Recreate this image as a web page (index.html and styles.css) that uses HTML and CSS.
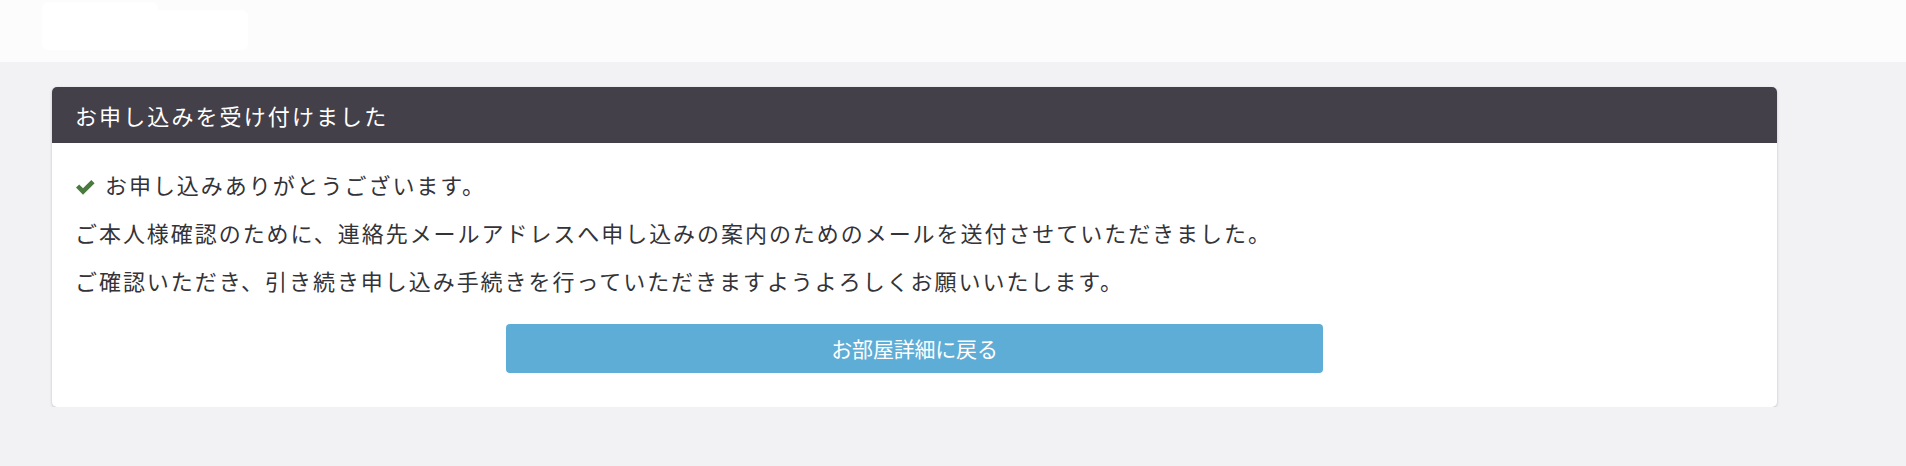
FILE: index.html
```html
<!DOCTYPE html>
<html lang="ja">
<head>
  <meta charset="UTF-8">
  <meta name="viewport" content="width=device-width, initial-scale=1.0">
  <title>お申し込み完了</title>
  <link rel="stylesheet" href="styles.css">
</head>
<body>
  <div class="topbar">
    <div class="logo">
      <span class="logo-top"></span>
      <span class="logo-bottom"></span>
    </div>
  </div>
  <div class="main">
    <div class="card">
      <div class="card-header">お申し込みを受け付けました</div>
      <div class="card-body">
        <p class="msg">
          <svg class="check" viewBox="0 0 19 15" width="19" height="15">
            <path d="M0 7.6 L3.2 4.4 L7 8.2 L15.3 0 L18.6 3.3 L7 14.8 Z" fill="#4b7a3f"/>
          </svg>お申し込みありがとうございます。
        </p>
        <p class="msg">ご本人様確認のために、連絡先メールアドレスへ申し込みの案内のためのメールを送付させていただきました。</p>
        <p class="msg">ご確認いただき、引き続き申し込み手続きを行っていただきますようよろしくお願いいたします。</p>
        <a class="btn-back" href="javascript:;">お部屋詳細に戻る</a>
      </div>
    </div>
  </div>
</body>
</html>
```

FILE: styles.css
```css
* {
  margin: 0;
  padding: 0;
  box-sizing: border-box;
}
body {
  background-color: #f2f2f4;
  font-family: "Noto Sans CJK JP", "Noto Sans", sans-serif;
  color: #333338;
}
.topbar {
  height: 62px;
  background-color: #fcfcfc;
  padding: 2px 0 0 42px;
}
.logo {
  position: relative;
  width: 206px;
  height: 48px;
}
.logo span {
  position: absolute;
  background-color: #fff;
  border-radius: 6px;
}
.logo-top {
  left: 0;
  top: 0;
  width: 116px;
  height: 20px;
}
.logo-bottom {
  left: 0;
  top: 8px;
  width: 206px;
  height: 40px;
  border-radius: 12px;
}
.main {
  padding: 25px 129px 0 52px;
}
.card {
  background-color: #fff;
  border-radius: 5px;
  box-shadow: 0 1px 3px rgba(0, 0, 0, 0.2);
  overflow: hidden;
}
.card-header {
  height: 56px;
  line-height: 56px;
  padding-left: 23px;
  background-color: #43404a;
  color: #fff;
  font-size: 22px;
  letter-spacing: 2.1px;
}
.card-body {
  padding: 17px 23px 34px 23px;
}
.msg {
  font-size: 22px;
  line-height: 48px;
  letter-spacing: 1.95px;
  white-space: nowrap;
}
.check {
  margin: 0 10px 0 1px;
  vertical-align: -1px;
}
.btn-back {
  display: block;
  width: 817px;
  height: 49px;
  margin: 20px auto 0 auto;
  line-height: 48px;
  text-align: center;
  background-color: #5eadd6;
  border-radius: 4px;
  color: #fff;
  font-size: 21px;
  letter-spacing: -0.2px;
  text-decoration: none;
}
```
